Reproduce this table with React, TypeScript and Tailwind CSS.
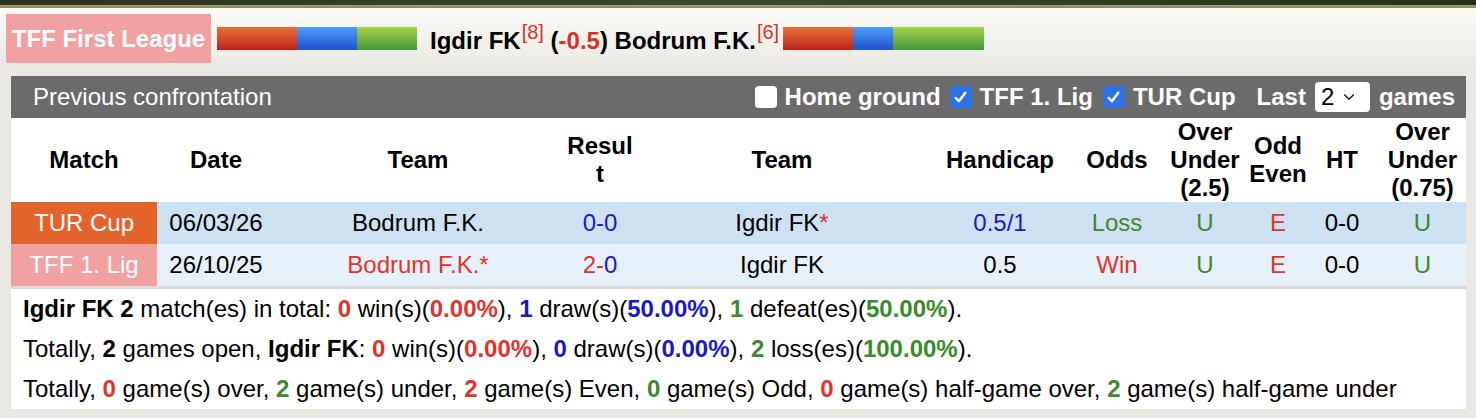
import React from "react";
import { ChevronDown } from "lucide-react";

const RED = "text-[#e0342c]";
const BLUE = "text-[#1a1ac0]";
const GREEN = "text-[#3b8a2c]";

const cols =
  "grid grid-cols-[146px_118px_286px_78px_286px_150px_84px_92px_54px_74px_87px]";

const ColorBar = ({ widths }: { widths: [number, number, number] }) => (
  <div className="flex h-[23px]">
    <div
      className="bg-linear-to-b from-[#e56f3a] to-[#bd1f1c]"
      style={{ width: widths[0] }}
    />
    <div
      className="bg-linear-to-b from-[#4d9cf6] to-[#2252d2]"
      style={{ width: widths[1] }}
    />
    <div
      className="bg-linear-to-b from-[#a6d247] to-[#3f973d]"
      style={{ width: widths[2] }}
    />
  </div>
);

const Check = ({ checked, className = "" }: { checked?: boolean; className?: string }) =>
  checked ? (
    <div
      className={`flex h-[22px] w-[22px] shrink-0 items-center justify-center rounded-[4px] bg-[#2f72e6] ${className}`}
    >
      <svg width="15" height="15" viewBox="0 0 14 14">
        <path
          d="M2.5 7.5 L5.5 10.5 L11.5 2.5"
          fill="none"
          stroke="white"
          strokeWidth="2.2"
          strokeLinecap="round"
          strokeLinejoin="round"
        />
      </svg>
    </div>
  ) : (
    <div className={`h-[22px] w-[22px] shrink-0 rounded-[4px] bg-white ${className}`} />
  );

const Cell = ({
  children,
  className = "",
}: {
  children?: React.ReactNode;
  className?: string;
}) => (
  <div className={`flex items-center justify-center text-center ${className}`}>
    {children}
  </div>
);

export default function App() {
  return (
    <div className="h-[418px] w-[1476px] overflow-hidden bg-[#e9e8e2] font-['Liberation_Sans',Arial,sans-serif] text-[24px] text-black">
      <div className="h-[5px] bg-linear-to-r from-[#27341e] via-[#3b4a2b] to-[#24301c]" />
      <div className="h-[3px] bg-linear-to-b from-[#a8a276] to-[#8a845a]" />

      <div className="flex items-center bg-linear-to-b from-[#fbfbf8] to-[#ebeae4] px-[6px] pt-[6px]">
        <div className="flex h-[49px] w-[205px] items-center justify-center whitespace-nowrap bg-[#f1a1a1] font-bold text-white">
          TFF First League
        </div>
        <div className="ml-[6px]">
          <ColorBar widths={[80, 60, 60]} />
        </div>
        <div className="ml-[13px] mr-[4px] mt-[4px] whitespace-nowrap font-bold">
          Igdir FK
          <sup className="ml-[1px] text-[20px] font-normal text-[#d6332a]">[8]</sup>{" "}
          (<span className="text-[#d6332a]">-0.5</span>) Bodrum F.K.
          <sup className="ml-[1px] text-[20px] font-normal text-[#d6332a]">[6]</sup>
        </div>
        <ColorBar widths={[70, 40, 91]} />
      </div>

      <div className="ml-[11px] mt-[13px] w-[1455px]">
        <div className="flex h-[42px] items-center justify-between bg-[#6b6b6b] pl-[22px] pr-[11px] text-white">
          <span>Previous confrontation</span>
          <div className="flex items-center font-bold">
            <Check />
            <span className="ml-[8px]">Home ground</span>
            <Check checked className="ml-[9px]" />
            <span className="ml-[8px]">TFF 1. Lig</span>
            <Check checked className="ml-[10px]" />
            <span className="ml-[8px]">TUR Cup</span>
            <span className="ml-[21px]">Last</span>
            <span className="ml-[9px] flex h-[30px] w-[55px] items-center rounded-[4px] bg-white pl-[6px] font-normal text-black">
              2
              <ChevronDown className="ml-[6px] h-[18px] w-[18px]" strokeWidth={1.5} />
            </span>
            <span className="ml-[9px]">games</span>
          </div>
        </div>

        <div className={`${cols} h-[84px] bg-white font-bold leading-[28px]`}>
          <Cell>Match</Cell>
          <Cell>Date</Cell>
          <Cell>Team</Cell>
          <Cell>
            Resul
            <br />t
          </Cell>
          <Cell>Team</Cell>
          <Cell>Handicap</Cell>
          <Cell>Odds</Cell>
          <Cell>
            Over
            <br />
            Under
            <br />
            (2.5)
          </Cell>
          <Cell>
            Odd
            <br />
            Even
          </Cell>
          <Cell>HT</Cell>
          <Cell>
            Over
            <br />
            Under
            <br />
            (0.75)
          </Cell>
        </div>

        <div className={`${cols} h-[42px] bg-[#cee1f2]`}>
          <Cell className="bg-[#e2632b] text-white">TUR Cup</Cell>
          <Cell>06/03/26</Cell>
          <Cell>Bodrum F.K.</Cell>
          <Cell className={BLUE}>0-0</Cell>
          <Cell>
            Igdir FK<span className={RED}>*</span>
          </Cell>
          <Cell className={BLUE}>0.5/1</Cell>
          <Cell className={GREEN}>Loss</Cell>
          <Cell className={GREEN}>U</Cell>
          <Cell className={RED}>E</Cell>
          <Cell>0-0</Cell>
          <Cell className={GREEN}>U</Cell>
        </div>

        <div className={`${cols} h-[42px] bg-[#e6f0f8]`}>
          <Cell className="bg-[#f1a1a1] text-white">TFF 1. Lig</Cell>
          <Cell>26/10/25</Cell>
          <Cell className={RED}>Bodrum F.K.*</Cell>
          <Cell>
            <span className={RED}>2-</span>
            <span className={BLUE}>0</span>
          </Cell>
          <Cell>Igdir FK</Cell>
          <Cell>0.5</Cell>
          <Cell className={RED}>Win</Cell>
          <Cell className={GREEN}>U</Cell>
          <Cell className={RED}>E</Cell>
          <Cell>0-0</Cell>
          <Cell className={GREEN}>U</Cell>
        </div>

        <div className="h-[3px] bg-[#dadada]" />

        <div className="bg-white pl-[12px] leading-[40px] whitespace-nowrap">
          <p>
            <b>Igdir FK 2</b> match(es) in total: <b className={RED}>0</b> win(s)(
            <b className={RED}>0.00%</b>), <b className={BLUE}>1</b> draw(s)(
            <b className={BLUE}>50.00%</b>), <b className={GREEN}>1</b> defeat(es)(
            <b className={GREEN}>50.00%</b>).
          </p>
          <p>
            Totally, <b>2</b> games open, <b>Igdir FK</b>: <b className={RED}>0</b> win(s)(
            <b className={RED}>0.00%</b>), <b className={BLUE}>0</b> draw(s)(
            <b className={BLUE}>0.00%</b>), <b className={GREEN}>2</b> loss(es)(
            <b className={GREEN}>100.00%</b>).
          </p>
          <p>
            Totally, <b className={RED}>0</b> game(s) over, <b className={GREEN}>2</b> game(s)
            under, <b className={RED}>2</b> game(s) Even, <b className={GREEN}>0</b> game(s)
            Odd, <b className={RED}>0</b> game(s) half-game over, <b className={GREEN}>2</b>{" "}
            game(s) half-game under
          </p>
        </div>
      </div>
    </div>
  );
}
